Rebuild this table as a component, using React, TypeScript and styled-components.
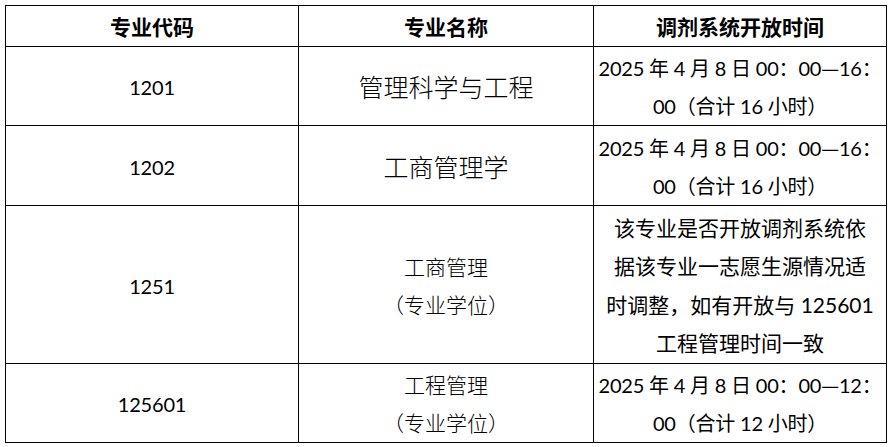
import React from "react";
import styled, { createGlobalStyle } from "styled-components";

const GlobalStyle = createGlobalStyle`
  html, body {
    margin: 0;
    padding: 0;
    background: #ffffff;
  }
`;

const Page = styled.div`
  padding: 5px 0 0 5px;
`;

const Table = styled.table`
  border-collapse: collapse;
  table-layout: fixed;
  width: 881px;
  color: #000000;
  font-family: Lato, "Noto Sans CJK SC", sans-serif;
`;

const Col = styled.col<{ $w: number }>`
  width: ${(p) => p.$w}px;
`;

const Row = styled.tr<{ $h: number }>`
  height: ${(p) => p.$h}px;
`;

const HeadCell = styled.th`
  border: 1px solid #000000;
  padding: 2px 0 0;
  font-size: 21px;
  font-weight: 700;
  line-height: 36px;
  text-align: center;
  vertical-align: middle;
`;

const Cell = styled.td<{ $size?: number; $light?: boolean; $lh?: number }>`
  border: 1px solid #000000;
  padding: 2px 0 0;
  font-size: ${(p) => p.$size ?? 20}px;
  font-weight: ${(p) => (p.$light ? 300 : 400)};
  color: #000000;
  line-height: ${(p) => p.$lh ?? 38}px;
  letter-spacing: ${(p) => ((p.$size ?? 20) === 20 ? -0.2 : 0)}px;
  text-align: center;
  vertical-align: middle;
  white-space: nowrap;
`;

const Dash = styled.span`
  font-family: "Noto Sans CJK SC", sans-serif;
`;

type Line = string;

interface Major {
  code: string;
  name: Line[];
  nameSize: number;
  time: Line[];
  timeSize: number;
  timeLh?: number;
  height: number;
}

const majors: Major[] = [
  {
    code: "1201",
    name: ["管理科学与工程"],
    nameSize: 25,
    time: ["2025 年 4 月 8 日 00：00—16：", "00（合计 16 小时）"],
    timeSize: 20,
    height: 79,
  },
  {
    code: "1202",
    name: ["工商管理学"],
    nameSize: 25,
    time: ["2025 年 4 月 8 日 00：00—16：", "00（合计 16 小时）"],
    timeSize: 20,
    height: 80,
  },
  {
    code: "1251",
    name: ["工商管理", "（专业学位）"],
    nameSize: 21,
    time: [
      "该专业是否开放调剂系统依",
      "据该专业一志愿生源情况适",
      "时调整，如有开放与 125601",
      "工程管理时间一致",
    ],
    timeSize: 21,
    timeLh: 38.5,
    height: 158,
  },
  {
    code: "125601",
    name: ["工程管理", "（专业学位）"],
    nameSize: 21,
    time: ["2025 年 4 月 8 日 00：00—12：", "00（合计 12 小时）"],
    timeSize: 20,
    height: 79,
  },
];

// the dash takes the CJK font so it is a full em wide
const Text: React.FC<{ text: string }> = ({ text }) => {
  const parts = text.split("—");
  return (
    <>
      {parts.map((p, i) => (
        <React.Fragment key={i}>
          {i > 0 && <Dash>—</Dash>}
          {p}
        </React.Fragment>
      ))}
    </>
  );
};

const Lines: React.FC<{ lines: Line[] }> = ({ lines }) => (
  <>
    {lines.map((l, i) => (
      <React.Fragment key={i}>
        {i > 0 && <br />}
        <Text text={l} />
      </React.Fragment>
    ))}
  </>
);

const App: React.FC = () => {
  return (
    <Page>
      <GlobalStyle />
      <Table>
        <colgroup>
          <Col $w={293} />
          <Col $w={295} />
          <Col $w={293} />
        </colgroup>
        <thead>
          <Row $h={41}>
            <HeadCell>专业代码</HeadCell>
            <HeadCell>专业名称</HeadCell>
            <HeadCell>调剂系统开放时间</HeadCell>
          </Row>
        </thead>
        <tbody>
          {majors.map((m) => (
            <Row key={m.code} $h={m.height}>
              <Cell>{m.code}</Cell>
              <Cell $size={m.nameSize} $light>
                <Lines lines={m.name} />
              </Cell>
              <Cell $size={m.timeSize} $lh={m.timeLh}>
                <Lines lines={m.time} />
              </Cell>
            </Row>
          ))}
        </tbody>
      </Table>
    </Page>
  );
};

export default App;
